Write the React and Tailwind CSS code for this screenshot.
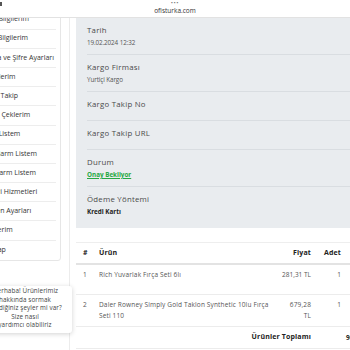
import React from 'react';

const menuItems = [
  'Üyelik Bilgilerim',
  'Adres Bilgilerim',
  'E-posta ve Şifre Ayarları',
  'Siparişlerim',
  'Sipariş Takip',
  'Hediye Çeklerim',
  'Favori Listem',
  'Fiyat Alarm Listem',
  'Stok Alarm Listem',
  'Müşteri Hizmetleri',
  'E-Bülten Ayarları',
  'Adreslerim',
  'Çıkış Yap'
];

const details = [
  { label: 'Tarih', value: '19.02.2024 12:32' },
  { label: 'Kargo Firması', value: 'Yurtiçi Kargo' },
  { label: 'Kargo Takip No', value: '' },
  { label: 'Kargo Takip URL', value: '' },
  { label: 'Durum', value: 'Onay Bekliyor', kind: 'status' },
  { label: 'Ödeme Yöntemi', value: 'Kredi Kartı', kind: 'bold' }
];

const font = { fontFamily: '"Open Sans", "Noto Sans", sans-serif' };

const DetailRow = ({ item, last }) => (
  <div className={`ml-[11px] pt-[7px] ${last ? 'pb-[11px]' : 'pb-[6px] border-b border-[#d9dde1]'}`}>
    <div className="text-[7.8px] leading-[10px] tracking-[0.25px] text-[#4a4a4a]">{item.label}</div>
    {item.value ? (
      <div
        className={`mt-[3px] h-[10px] leading-[10px] text-[6.3px] ${
          item.kind === 'status'
            ? 'font-bold text-[#27a844] underline'
            : item.kind === 'bold'
            ? 'font-bold text-[#222]'
            : 'text-[#555] tracking-[-0.1px]'
        }`}
      >
        {item.value}
      </div>
    ) : (
      <div className="h-[5px]" />
    )}
  </div>
);

export default function App() {
  return (
    <div className="relative w-[350px] h-[350px] overflow-hidden bg-white" style={font}>
      {/* browser address bar */}
      <div className="absolute top-0 left-0 z-20 w-full h-[18px] bg-white border-b border-[#e2e2e2] flex flex-col items-center">
        <div className="absolute left-0 top-[2px] w-[2px] h-[4px] bg-[#555]" />
        <div className="text-[6px] leading-[7px] text-[#777] tracking-[0.5px]">•••</div>
        <div className="text-[6.5px] leading-[8px] text-[#333]">ofisturka.com</div>
      </div>

      <div className="flex h-full">
        {/* sidebar */}
        <div className="w-[70px] shrink-0 border-r border-[#ececec] relative">
          <div className="mt-[9.4px] ml-[-24px] w-[85px] bg-white border border-[#e6e6e6] rounded-[3px] overflow-hidden">
            {menuItems.map((m, i) => (
              <div
                key={m}
                className={`h-[19.2px] flex items-center mr-[4px] text-[7px] font-medium text-[#333] whitespace-nowrap ${
                  i < menuItems.length - 1 ? 'border-b border-[#ededed]' : ''
                }`}
              >
                {m}
              </div>
            ))}
          </div>
        </div>

        {/* content */}
        <div className="flex-1 pl-[6px]">
          <div className="bg-[#e9ecef] pt-[18px] w-[300px]">
            {details.map((d, i) => (
              <DetailRow key={d.label} item={d} last={i === details.length - 1} />
            ))}
          </div>

          <div className="mt-[14px] w-[320px] text-[6.5px] tracking-[0.15px] text-[#555]">
            <div className="flex h-[23px] items-center border-t border-[#eeeeee] border-b-2 border-b-[#e3e3e3] font-bold text-[#222] text-[7px]">
              <div className="w-[16px] pl-[7px]">#</div>
              <div className="w-[189px] pl-[7px]">Ürün</div>
              <div className="w-[37px] pr-[7px] text-right">Fiyat</div>
              <div className="w-[27px] pr-[4px] text-right">Adet</div>
            </div>
            <div className="flex h-[30px] pt-[4px] border-b border-[#ececec] leading-[11px]">
              <div className="w-[16px] pl-[7px]">1</div>
              <div className="w-[189px] pl-[7px] whitespace-nowrap">Rich Yuvarlak Fırça Seti 6lı</div>
              <div className="w-[37px] pr-[7px] text-right whitespace-nowrap tracking-normal">281,31 TL</div>
              <div className="w-[27px] pr-[4px] text-right">1</div>
            </div>
            <div className="flex h-[32px] pt-[4px] border-b border-[#ececec] leading-[11px]">
              <div className="w-[16px] pl-[7px]">2</div>
              <div className="w-[189px] pl-[7px] whitespace-nowrap">
                Daler Rowney Simply Gold Taklon Synthetic 10lu Fırça
                <br />
                Seti 110
              </div>
              <div className="w-[37px] pr-[7px] text-right">
                679,28
                <br />
                TL
              </div>
              <div className="w-[27px] pr-[4px] text-right">1</div>
            </div>
            <div className="flex h-[22px] items-center border-b border-[#ececec]">
              <div className="w-[242px] pr-[7px] text-right font-bold text-[#222] text-[7px]">Ürünler Toplamı</div>
              <div className="pl-[28px] font-bold text-[#222] whitespace-nowrap">960,59 TL</div>
            </div>
          </div>
        </div>
      </div>

      {/* chat popup */}
      <div className="absolute left-[-22px] top-[286px] z-10 w-[94px] bg-white rounded-[3px] shadow-[0_1px_5px_rgba(0,0,0,0.18)] pt-[1px] pb-[3px] text-center text-[6.3px] leading-[8.5px] tracking-[0.1px] text-[#444]">
        Merhaba! Ürünlerimiz
        <br />
        hakkında sormak
        <br />
        istediğiniz şeyler mi var?
        <br />
        Size nasıl
        <br />
        yardımcı olabiliriz
      </div>
    </div>
  );
}
